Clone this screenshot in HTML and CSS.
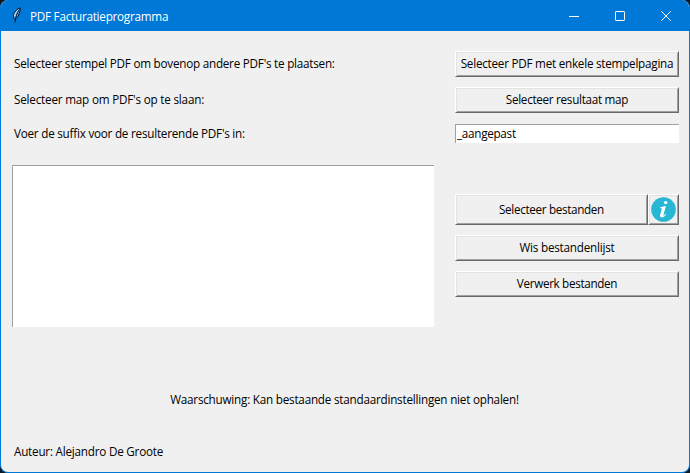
FILE: index.html
```html
<!DOCTYPE html>
<html lang="nl">
<head>
<meta charset="utf-8">
<title>PDF Facturatieprogramma</title>
<link rel="stylesheet" href="styles.css">
</head>
<body>
<div class="window">
  <header class="titlebar">
    <svg class="feather" width="10" height="17" viewBox="0 0 10 17"><path d="M8.300.8C5 1.800 2.200 5 1.600 8.500c-.2 1.500.2 2.700 1 3.700C5.500 11 8.200 6 8.300.8z" fill="#78b4ee" stroke="#06111f" stroke-width="1"/><path d="M7.300 2.500C5 6 3.500 10 3 15.500" fill="none" stroke="#06111f" stroke-width="1"/><path d="M6.300 2.800C4.500 4 3 6 2.600 9" fill="none" stroke="#d5ecff" stroke-width="1"/></svg>
    <h1 class="title">PDF Facturatieprogramma</h1>
    <div class="controls">
      <svg width="10" height="10" viewBox="0 0 10 10"><path d="M0 5.500h10"/></svg>
      <svg width="10" height="10" viewBox="0 0 10 10"><rect x=".5" y=".5" width="9" height="9" rx=".6"/></svg>
      <svg width="10" height="10" viewBox="0 0 10 10"><path d="M.2.200l9.600 9.600M9.800.200L.2 9.800"/></svg>
    </div>
  </header>
  <main class="content">
    <div class="row row-stamp"><span class="label t-stamp">Selecteer stempel PDF om bovenop andere PDF's te plaatsen:</span><button class="btn"><span class="t-stampbtn">Selecteer PDF met enkele stempelpagina</span></button></div>
    <div class="row row-map"><span class="label t-map">Selecteer map om PDF's op te slaan:</span><button class="btn"><span class="t-mapbtn">Selecteer resultaat map</span></button></div>
    <div class="row row-suffix"><span class="label t-suffix">Voer de suffix voor de resulterende PDF's in:</span><div class="entry"><span class="t-entry">_aangepast</span></div></div>
    <div class="files">
      <div class="listbox"></div>
      <div class="actions">
        <div class="split">
          <button class="btn"><span class="t-select">Selecteer bestanden</span></button>
          <button class="btn info" aria-label="Info"><svg width="25" height="25" viewBox="0 0 25 25"><circle cx="12.500" cy="12.500" r="12.300" fill="#27b7d5"/><circle cx="14.700" cy="5.600" r="1.700" fill="#fff"/><path d="M9.300 10.300c1.500-.2 3-.7 4.900-1.200h.7l-2.400 8.700c-.2.800.2.900.7.500.6-.4 1-.9 1.500-1.500l.5.400c-1.200 2-2.500 3.100-4.300 3.100-1.600 0-2.200-.9-1.800-2.400l1.700-5.700c.2-.8-.1-1-1.500-1z" fill="#fff"/></svg></button>
        </div>
        <button class="btn"><span class="t-wis">Wis bestandenlijst</span></button>
        <button class="btn"><span class="t-verwerk">Verwerk bestanden</span></button>
      </div>
    </div>
    <p class="status"><span class="t-status">Waarschuwing: Kan bestaande standaardinstellingen niet ophalen!</span></p>
    <p class="author"><span class="t-author">Auteur: Alejandro De Groote</span></p>
  </main>
</div>
</body>
</html>
```
FILE: styles.css
```css
* { box-sizing: border-box; }
body { margin: 0; background: #101820; font: 11.7px/16px "Open Sans", "Noto Sans", sans-serif; color: #000; }
.window { width: 690px; height: 473px; border: 1px solid #0078d7; border-top: 0; border-radius: 8px; overflow: hidden; background: #f0f0f0; }
.titlebar { height: 31px; background: #0078d7; color: #fff; display: flex; align-items: center; padding-left: 11px; }
.feather { display: block; margin-right: 8px; }
.title { margin: 0; font: inherit; white-space: nowrap; letter-spacing: -0.24px; }
.controls { margin-left: auto; margin-right: 18px; display: flex; gap: 36px; }
.controls svg { display: block; fill: none; stroke: #fff; stroke-width: 1; }
.content { padding: 20px 10px 0 11px; }
.row { display: flex; justify-content: space-between; align-items: center; height: 26px; white-space: nowrap; }
.label { padding: 0 0 2px 2px; }
.row-map { margin-top: 10px; }
.row-suffix { margin-top: 11px; height: 19px; }
.btn { display: flex; align-items: center; justify-content: center; width: 224px; height: 26px; padding: 0 0 2px; border: 1px solid; border-color: #fff #696969 #696969 #fff; box-shadow: inset 1px 1px #e3e3e3, inset -1px -1px #a0a0a0; background: #f0f0f0; color: #000; font: inherit; white-space: nowrap; border-radius: 0; }
.entry { width: 224px; height: 19px; background: #fff; border-top: 1px solid #a0a0a0; border-left: 1px solid #a0a0a0; padding: 0 0 0 1px; }
.files { display: flex; justify-content: space-between; margin-top: 22px; }
.listbox { width: 422px; height: 162px; background: #fff; border-top: 1px solid #a0a0a0; border-left: 1px solid #a0a0a0; }
.actions { display: flex; flex-direction: column; gap: 10px; padding-top: 29px; }
.split { display: flex; }
.split .btn { width: 193px; height: 31px; }
.split .info { width: 31px; padding: 0; }
.status { margin: 64px 0 0; padding-right: 2px; text-align: center; }
.author { margin: 36px 0 0 2px; }

.t-stamp { letter-spacing: -0.235px; }
.t-stampbtn { letter-spacing: -0.24px; }
.t-map { letter-spacing: -0.2px; }
.t-mapbtn { letter-spacing: -0.29px; }
.t-suffix { letter-spacing: -0.23px; }
.t-entry { letter-spacing: -0.28px; }
.t-select { letter-spacing: -0.33px; }
.t-wis { letter-spacing: -0.22px; }
.t-verwerk { letter-spacing: -0.33px; }
.t-status { letter-spacing: -0.22px; }
.t-author { letter-spacing: -0.22px; }
```
